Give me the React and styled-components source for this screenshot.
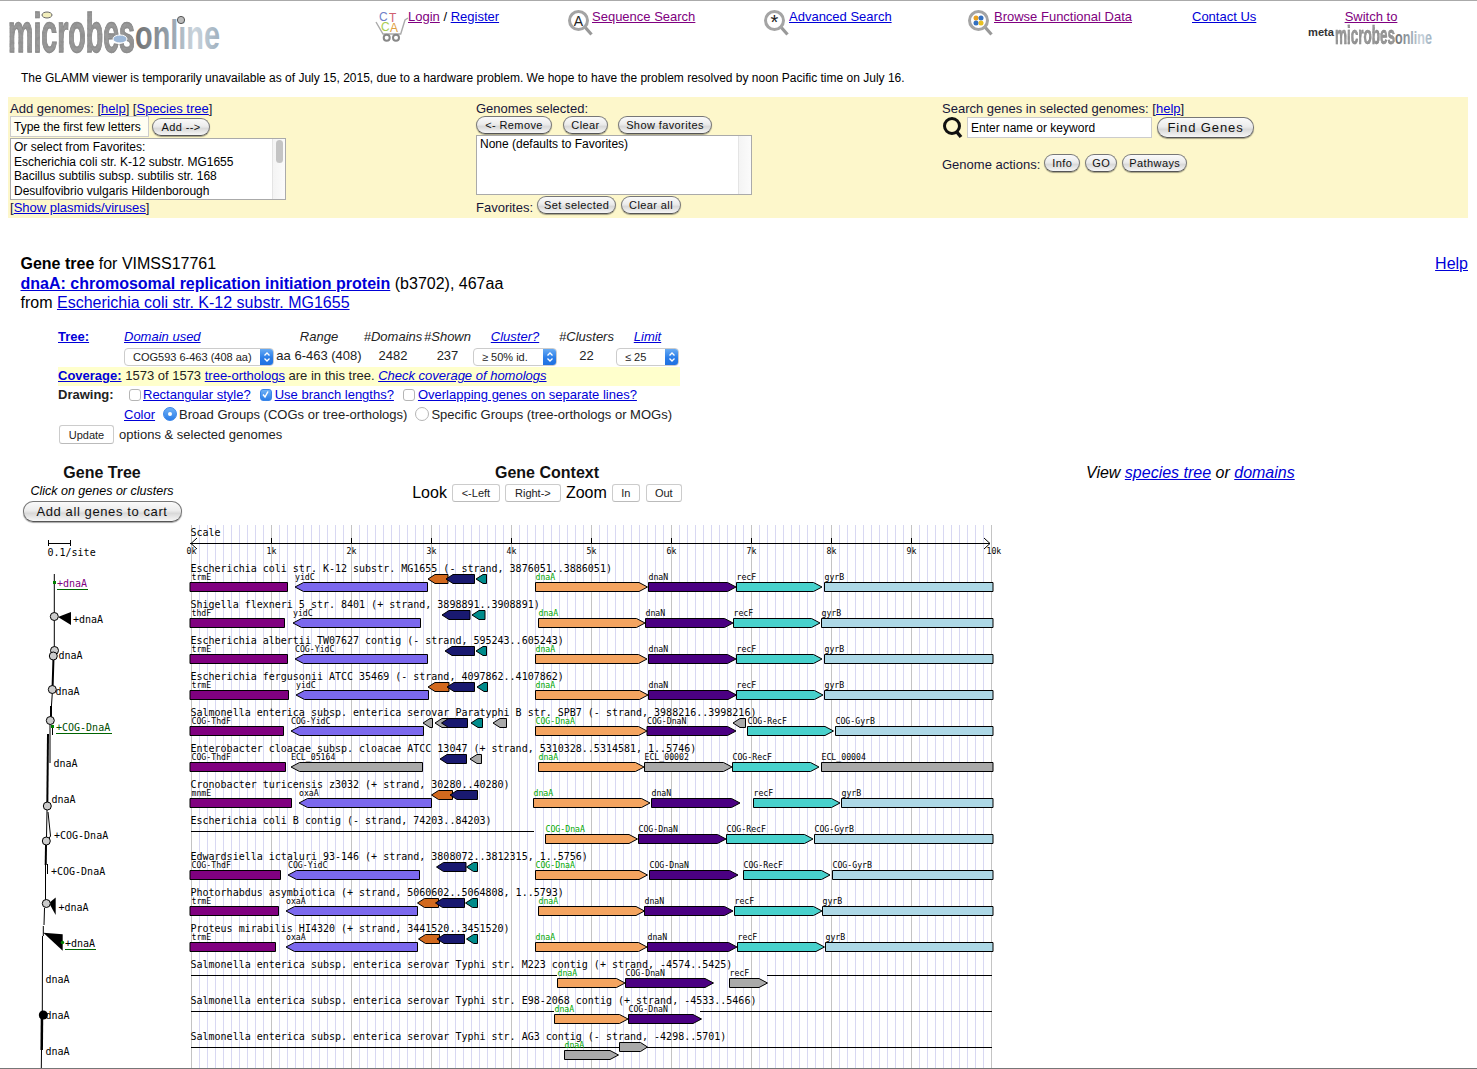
import React from "react";
import styled, { createGlobalStyle } from "styled-components";

const Global = createGlobalStyle`
  html, body { margin: 0; padding: 0; background: #fff; overflow: hidden; }
  body { font-family: "Liberation Sans", Arial, sans-serif; color: #000; }
`;

const Page = styled.div`
  height: 1069px;
  box-sizing: border-box;
  border-top: 1px solid #aaa;
  border-bottom: 1px solid #777;
  overflow: hidden;
`;

const Link = styled.a`
  color: ${(p) => (p.$visited ? "#800080" : "#0000d8")};
  text-decoration: underline;
  font-weight: ${(p) => (p.$bold ? "bold" : "inherit")};
  font-style: ${(p) => (p.$italic ? "italic" : "inherit")};
`;

/* header */
const Header = styled.div`
  display: grid;
  grid-template-columns: 376px 192px 196px 204px 224px 117px 1fr;
  height: 62px;
  font-size: 13px;
`;
const LogoCell = styled.div`
  padding: 8px 0 0 6px;
`;
const NavItem = styled.div`
  display: flex;
  align-items: flex-start;
  gap: ${(p) => p.$gap || 1}px;
  padding-top: 8px;
  line-height: 15px;
  white-space: pre;
`;
const SwitchItem = styled.div`
  padding-top: 8px;
  line-height: 15px;
  text-align: center;
  width: 124px;
  display: flex;
  flex-direction: column;
  align-items: center;
`;
const Notice = styled.div`
  font-size: 12px;
  line-height: 14px;
  padding: 8px 0 0 21px;
  height: 34px;
  box-sizing: border-box;
`;

/* yellow genome panel */
const Panel = styled.div`
  margin: 0 9px 0 8px;
  height: 121px;
  background: #fdf7cb;
  display: grid;
  grid-template-columns: 466px 466px 1fr;
  padding-left: 2px;
  box-sizing: border-box;
  font-size: 13px;
  color: #16163a;
`;
const PanelCol = styled.div`
  display: flex;
  flex-direction: column;
`;
const PanelLabel = styled.div`
  line-height: 15px;
  padding-top: 4px;
  height: 19px;
  box-sizing: border-box;
`;
const Row = styled.div`
  display: flex;
  align-items: center;
  gap: ${(p) => p.$gap || 0}px;
  margin-top: ${(p) => p.$mt || 0}px;
`;
const Pill = styled.button`
  font-family: "Liberation Sans", Arial, sans-serif;
  font-size: ${(p) => p.$size || 11}px;
  letter-spacing: ${(p) => p.$spacing ?? 0.4}px;
  color: #111;
  height: ${(p) => p.$h || 18}px;
  width: ${(p) => p.$w}px;
  margin-left: ${(p) => p.$ml || 0}px;
  margin-top: ${(p) => p.$mt || 0}px;
  padding: 0;
  white-space: nowrap;
  border: 1px solid #777;
  border-bottom-color: #555;
  border-radius: 10px;
  background: linear-gradient(#fafafa, #ececec 45%, #d9d9d9 60%, #f6f6f6);
  box-shadow: 0 1px 1px rgba(0, 0, 0, 0.35);
`;
const FieldBox = styled.div`
  width: ${(p) => p.$w}px;
  height: 21px;
  background: ${(p) => (p.$white ? "#fff" : "#fffef2")};
  border: 1px solid #ccc;
  box-sizing: border-box;
  font-size: 12px;
  line-height: 20px;
  padding-left: ${(p) => p.$pad || 3}px;
  color: #000;
`;
const ListBox = styled.div`
  position: relative;
  width: ${(p) => p.$w}px;
  height: ${(p) => p.$h}px;
  margin-top: ${(p) => p.$mt || 0}px;
  background: #fff;
  border: 1px solid #aaa;
  box-sizing: border-box;
  font-size: 12px;
  line-height: 14.7px;
  padding: 1px 0 0 3px;
  color: #000;
`;
const ListScroll = styled.div`
  position: absolute;
  top: 0;
  right: 0;
  bottom: 0;
  width: 12px;
  background: linear-gradient(90deg, #f4f4f4, #fbfbfb);
  border-left: 1px solid #e4e4e4;
  &::after {
    content: "";
    display: ${(p) => (p.$thumb ? "block" : "none")};
    margin: 1px 0 0 3px;
    width: 7px;
    height: 23px;
    border-radius: 4px;
    background: #c4c4c4;
  }
`;
const FootLine = styled.div`
  line-height: 15px;
  margin-top: ${(p) => p.$mt || 0}px;
`;
const ActionLabel = styled.span`
  padding-top: 2px;
`;

/* gene title block */
const GeneHead = styled.div`
  padding: 36px 9px 0 20.5px;
  height: 111px;
  box-sizing: border-box;
  font-size: 16px;
  line-height: 19.5px;
  display: flex;
  justify-content: space-between;
`;

/* options table */
const Options = styled.div`
  margin: 0 0 0 58px;
  width: 622px;
  font-size: 13px;
`;
const OptGrid = styled.div`
  display: grid;
  grid-template-columns: 66px 151px 88px 60px 49px 86px 57px 65px;
  align-items: center;
`;
const HeadCell = styled.div`
  height: 18px;
  line-height: 16px;
  font-style: ${(p) => (p.$plain ? "normal" : "italic")};
  white-space: nowrap;
  text-align: ${(p) => (p.$left ? "left" : "center")};
  color: #222;
`;
const ValCell = styled.div`
  height: 20px;
  line-height: 17px;
  white-space: nowrap;
  text-align: center;
  color: #222;
  display: flex;
  justify-content: ${(p) => (p.$left ? "flex-start" : "center")};
`;
const Select = styled.div`
  width: ${(p) => p.$w}px;
  height: 18px;
  margin-top: 1px;
  box-sizing: border-box;
  border: 1px solid #ccc;
  border-radius: 4px;
  background: #fff;
  font-size: 11px;
  line-height: 17px;
  display: flex;
  justify-content: space-between;
  padding-left: ${(p) => p.$pad}px;
  overflow: hidden;
  color: #222;
`;
const SelectArrow = styled.span`
  width: 14px;
  margin: -1px -1px -1px 0;
  background: linear-gradient(#6eb0f5, #2a7de8 55%, #1e6fe0);
  display: flex;
  align-items: center;
  justify-content: center;
`;
const CoverageRow = styled.div`
  background: #ffffcc;
  height: 19px;
  line-height: 17px;
  color: #222;
`;
const OptRow = styled.div`
  display: flex;
  align-items: center;
  box-sizing: border-box;
  height: ${(p) => p.$h || 20}px;
  padding: 0 0 2px ${(p) => p.$pl || 0}px;
  white-space: nowrap;
  color: #222;
`;
const DrawingLabel = styled.b`
  width: 71px;
`;
const Mark = styled.span`
  display: inline-flex;
  align-items: center;
  justify-content: center;
  width: ${(p) => p.$w || 12}px;
  height: ${(p) => p.$w || 12}px;
  box-sizing: border-box;
  margin: ${(p) => p.$m || "0 2px 0 0"};
  border: 1px solid ${(p) => (p.$on ? "#3a86ea" : "#b5b5b5")};
  border-radius: ${(p) => (p.$round ? "50%" : "3px")};
  background: ${(p) => (p.$on ? "linear-gradient(#6eb0f5, #2a7de8)" : "#fff")};
  flex: none;
  &::after {
    content: "";
    display: ${(p) => (p.$on && p.$round ? "block" : "none")};
    width: 4px;
    height: 4px;
    border-radius: 50%;
    background: #fff;
  }
`;
const FlatButton = styled.button`
  font-family: "Liberation Sans", Arial, sans-serif;
  font-size: 11px;
  color: #222;
  width: ${(p) => p.$w}px;
  height: ${(p) => p.$h || 18}px;
  padding: 0;
  margin: ${(p) => p.$m || 0};
  background: #fff;
  border: 1px solid #ccc;
  border-bottom-color: #bbb;
  border-radius: 3px;
`;

/* section titles above the diagrams */
const Sections = styled.div`
  display: grid;
  grid-template-columns: 204px 686px 1fr;
  margin-top: 18px;
  height: 61px;
`;
const Section = styled.div`
  display: flex;
  flex-direction: column;
  align-items: center;
`;
const SectionTitle = styled.div`
  font-size: 16px;
  font-weight: bold;
  line-height: 18px;
  color: #111;
`;
const Hint = styled.div`
  font-size: 12.5px;
  font-style: italic;
  line-height: 18px;
`;
const Controls = styled.div`
  display: flex;
  align-items: center;
  gap: 5px;
  font-size: 16px;
  line-height: 20px;
  margin-top: 1px;
`;
const ViewLinks = styled.div`
  padding-left: 196px;
  font-size: 16px;
  font-style: italic;
  line-height: 18px;
`;
const Diagrams = styled.div`
  display: flex;
  align-items: flex-start;
`;
const Chart = styled.svg`
  display: block;
  flex: none;
  overflow: visible;
  text {
    font-family: "DejaVu Sans Mono", "Liberation Mono", monospace;
    font-size: 10px;
  }
  text.small {
    font-size: 8.2px;
  }
`;
const Drawing = styled.svg`
  display: block;
  flex: none;
  overflow: visible;
  margin-top: ${(p) => p.$mt || 0}px;
  margin-right: ${(p) => p.$mr || 0}px;
  text {
    font-family: "Liberation Sans", Arial, sans-serif;
  }
`;

/* drawings */
const Mag = ({ w, children }) => (
  <Drawing width={w} height="26" viewBox={`0 0 ${w} 26`} $mt={1}>
    <line x1="16" y1="16" x2="23.5" y2="24.5" stroke="#999" strokeWidth="3.2" />
    <circle cx="10.5" cy="10.5" r="9" fill="#fff" stroke="#a4a4a4" strokeWidth="3" />
    {children}
  </Drawing>
);

const Cart = () => (
  <Drawing width="30" height="31" viewBox="0 0 30 31" $mt={2}>
    <path d="M0 11 L7 23 H24.7 L29 9 L32 7" fill="#fff" stroke="#aaa" strokeWidth="1.4" />
    <text x="3" y="10" fontSize="12" fill="#7080c8">C</text>
    <text x="13" y="11" fontSize="12" fill="#d06070">T</text>
    <text x="5" y="20" fontSize="12" fill="#a8cc50">C</text>
    <text x="14" y="21" fontSize="12" fill="#e0a040">A</text>
    <circle cx="10.7" cy="26.7" r="3" fill="#fff" stroke="#888" strokeWidth="2" />
    <circle cx="20" cy="26.7" r="3" fill="#fff" stroke="#888" strokeWidth="2" />
  </Drawing>
);

const Logo = ({ w, h }) => (
  <Drawing width={w} height={h} viewBox="0 0 216 46">
    <defs>
      <filter id="rough" x="-5%" y="-5%" width="110%" height="110%">
        <feTurbulence type="fractalNoise" baseFrequency="0.28" numOctaves="2" seed="3" />
        <feColorMatrix values="0 0 0 0 0.28  0 0 0 0 0.28  0 0 0 0 0.28  3.4 0 0 0 -1.4" />
        <feComposite in2="SourceGraphic" operator="in" result="n" />
        <feMerge>
          <feMergeNode in="SourceGraphic" />
          <feMergeNode in="n" />
        </feMerge>
      </filter>
      <linearGradient id="onlineFill" x1="0" x2="1" y1="0" y2="0">
        <stop offset="0" stopColor="#707070" />
        <stop offset="0.45" stopColor="#9aa8b4" />
        <stop offset="0.7" stopColor="#ccd6de" />
        <stop offset="1" stopColor="#9fb0be" />
      </linearGradient>
    </defs>
    <text x="2" y="43" fontSize="56" fontWeight="bold" textLength="127" lengthAdjust="spacingAndGlyphs" fill="#9a9a9a" stroke="#8a8a8a" strokeWidth="1.4" filter="url(#rough)">microbes</text>
    <text x="129" y="40" fontSize="40" fontWeight="bold" textLength="85" lengthAdjust="spacingAndGlyphs" fill="url(#onlineFill)">online</text>
    <ellipse cx="41" cy="6" rx="5" ry="3" fill="#f2eebc" stroke="#666" />
    <circle cx="175" cy="11" r="3.6" fill="#bbb" stroke="#555" />
    <ellipse cx="114" cy="30" rx="7" ry="4" fill="#9db8d8" stroke="#fff" />
  </Drawing>
);

const SmallLogo = () => (
  <Drawing width="126" height="24" viewBox="0 0 126 24">
    <text x="0" y="12" fontSize="10" fontWeight="bold" textLength="26" lengthAdjust="spacingAndGlyphs" fill="#333">meta</text>
    <text x="27" y="20" fontSize="26" fontWeight="bold" textLength="60" lengthAdjust="spacingAndGlyphs" fill="#9a9a9a" stroke="#8a8a8a" strokeWidth="0.6" filter="url(#rough)">microbes</text>
    <text x="87" y="20" fontSize="19" fontWeight="bold" textLength="37" lengthAdjust="spacingAndGlyphs" fill="url(#onlineFill)">online</text>
  </Drawing>
);

const Chevrons = () => (
  <svg width="8" height="12" viewBox="0 0 8 12">
    <path d="M1.5 4.5 L4 2 L6.5 4.5 M1.5 7.5 L4 10 L6.5 7.5" fill="none" stroke="#fff" strokeWidth="1.3" />
  </svg>
);

const Tick = () => (
  <svg width="9" height="9" viewBox="0 0 9 9">
    <path d="M2 4.5 L4 7 L7 1.5" fill="none" stroke="#fff" strokeWidth="1.5" />
  </svg>
);

const Search = () => (
  <Drawing width="22" height="22" viewBox="0 0 22 22" $mr={3}>
    <circle cx="10" cy="10" r="7.5" fill="none" stroke="#111" strokeWidth="3" />
    <line x1="14" y1="15" x2="19" y2="21" stroke="#111" strokeWidth="3.5" />
  </Drawing>
);

/* gene colours */
const C = {
  pur: "#800080",
  sla: "#7b68ee",
  org: "#d2691e",
  nav: "#191970",
  tea: "#008b8b",
  san: "#f4a460",
  ind: "#4b0082",
  tur: "#48d1cc",
  blu: "#add8e6",
  gry: "#a9a9a9",
};

// [x1, x2, dir, colour, label, flag]  flag: "g" green label, "t" upper small gene
const rows = [
  { title: "Escherichia coli str. K-12 substr. MG1655 (- strand, 3876051..3886051)", genes: [
    [190, 287.5, 0, "pur", "trmE"], [295, 427.5, -1, "sla", "yidC"], [428, 448, -1, "org", "", "t"], [446, 474.5, -1, "nav", "", "t"], [476, 486.5, -1, "tea", "", "t"],
    [535.5, 647.5, 1, "san", "dnaA", "g"], [648.5, 736, 1, "ind", "dnaN"], [736.5, 822, 1, "tur", "recF"], [824.5, 993, 0, "blu", "gyrB"] ] },
  { title: "Shigella flexneri 5 str. 8401 (+ strand, 3898891..3908891)", genes: [
    [190, 284.5, 0, "pur", "thdF"], [293, 420.5, -1, "sla", "yidC"], [442, 470, -1, "nav", "", "t"], [472, 485, -1, "tea", "", "t"],
    [538.5, 645, 1, "san", "dnaA", "g"], [645.5, 733, 1, "ind", "dnaN"], [733.5, 820, 1, "tur", "recF"], [821.5, 993, 0, "blu", "gyrB"] ] },
  { title: "Escherichia albertii TW07627 contig (- strand, 595243..605243)", genes: [
    [190, 287.5, 0, "pur", "trmE"], [295, 427.5, -1, "sla", "COG-YidC"], [445, 474.5, -1, "nav", "", "t"], [476, 486.5, -1, "tea", "", "t"],
    [535.5, 647, 1, "san", "dnaA", "g"], [648.5, 736, 1, "ind", "dnaN"], [736.5, 822, 1, "tur", "recF"], [824.5, 993, 0, "blu", "gyrB"] ] },
  { title: "Escherichia fergusonii ATCC 35469 (- strand, 4097862..4107862)", genes: [
    [190, 288.5, 0, "pur", "trmE"], [296, 428.5, -1, "sla", "yidC"], [428, 449, -1, "org", "", "t"], [447, 474.5, -1, "nav", "", "t"], [477, 487.5, -1, "tea", "", "t"],
    [535.5, 648, 1, "san", "dnaA", "g"], [648.5, 736.5, 1, "ind", "dnaN"], [736.5, 823, 1, "tur", "recF"], [824.5, 993, 0, "blu", "gyrB"] ] },
  { title: "Salmonella enterica subsp. enterica serovar Paratyphi B str. SPB7 (- strand, 3988216..3998216)", genes: [
    [190, 283.5, 0, "pur", "COG-ThdF"], [291, 423.5, -1, "sla", "COG-YidC"], [423, 432.5, -1, "gry", "", "t"], [435, 450, -1, "gry", "", "t"], [441.5, 467.5, -1, "nav", "", "t"], [471, 482.5, -1, "tea", "", "t"], [493, 506.5, -1, "gry", "", "t"],
    [535.5, 647, 1, "san", "COG-DnaA", "g"], [647, 736, 1, "ind", "COG-DnaN"], [733, 745.5, -1, "gry", "", "t"], [747.5, 833.5, 1, "tur", "COG-RecF"], [835.5, 993, 0, "blu", "COG-GyrB"] ] },
  { title: "Enterobacter cloacae subsp. cloacae ATCC 13047 (+ strand, 5310328..5314581, 1..5746)", genes: [
    [190, 285.5, 0, "pur", "COG-ThdF"], [291, 422.5, -1, "gry", "ECL_05164"], [440, 466.5, -1, "nav", "", "t"], [470, 481.5, -1, "gry", "", "t"],
    [538.5, 644, 1, "san", "dnaA", "g"], [644.5, 732, 1, "gry", "ECL_00002"], [732.5, 819, 1, "tur", "COG-RecF"], [821.5, 993, 0, "gry", "ECL_00004"] ] },
  { title: "Cronobacter turicensis z3032 (+ strand, 30280..40280)", genes: [
    [190, 291.5, 0, "pur", "mnmE"], [299, 431.5, -1, "sla", "oxaA"], [431.5, 452.5, -1, "org", "", "t"], [450, 477.5, -1, "nav", "", "t"],
    [533.5, 650, 1, "san", "dnaA", "g"], [651.5, 740, 1, "ind", "dnaN"], [753.5, 840, 1, "tur", "recF"], [841.5, 993, 0, "blu", "gyrB"] ] },
  { title: "Escherichia coli B contig (- strand, 74203..84203)", lines: [[191, 534]], genes: [
    [545.5, 637.5, 1, "san", "COG-DnaA", "g"], [638.5, 726, 1, "ind", "COG-DnaN"], [726.5, 813, 1, "tur", "COG-RecF"], [814.5, 993, 0, "blu", "COG-GyrB"] ] },
  { title: "Edwardsiella ictaluri 93-146 (+ strand, 3808072..3812315, 1..5756)", genes: [
    [190, 280.5, 0, "pur", "COG-ThdF"], [288, 419.5, -1, "sla", "COG-YidC"], [436.5, 466, -1, "nav", "", "t"], [466.5, 477.5, -1, "tea", "", "t"],
    [535.5, 647.5, 1, "san", "COG-DnaA", "g"], [649.5, 738, 1, "ind", "COG-DnaN"], [743.5, 830, 1, "tur", "COG-RecF"], [832.5, 993, 0, "blu", "COG-GyrB"] ] },
  { title: "Photorhabdus asymbiotica (+ strand, 5060602..5064808, 1..5793)", genes: [
    [190, 278.5, 0, "pur", "trmE"], [286, 417.5, -1, "sla", "oxaA"], [417.5, 438.5, -1, "org", "", "t"], [435.5, 464.5, -1, "nav", "", "t"], [465.5, 477.5, -1, "tea", "", "t"],
    [538.5, 644.5, 1, "san", "dnaA", "g"], [644.5, 733, 1, "ind", "dnaN"], [734.5, 822, 1, "tur", "recF"], [822.5, 993, 0, "blu", "gyrB"] ] },
  { title: "Proteus mirabilis HI4320 (+ strand, 3441520..3451520)", genes: [
    [190, 275.5, 0, "pur", "trmE"], [286, 417.5, -1, "sla", "oxaA"], [418.5, 439.5, -1, "org", "", "t"], [437, 464.5, -1, "nav", "", "t"], [466.5, 477.5, -1, "tea", "", "t"],
    [535.5, 647, 1, "san", "dnaA", "g"], [647.5, 737, 1, "ind", "dnaN"], [737.5, 824.5, 1, "tur", "recF"], [825.5, 993, 0, "blu", "gyrB"] ] },
  { title: "Salmonella enterica subsp. enterica serovar Typhi str. M223 contig (+ strand, -4574..5425)", lines: [[191, 557], [767, 992]], genes: [
    [557.5, 625, 1, "san", "dnaA", "g"], [625.5, 713.5, 1, "ind", "COG-DnaN"], [729.5, 767.5, 1, "gry", "recF"] ] },
  { title: "Salmonella enterica subsp. enterica serovar Typhi str. E98-2068 contig (+ strand, -4533..5466)", lines: [[191, 554], [700, 992]], genes: [
    [554.5, 628, 1, "san", "dnaA", "g"], [628.5, 701.5, 1, "ind", "COG-DnaN"] ] },
  { title: "Salmonella enterica subsp. enterica serovar Typhi str. AG3 contig (- strand, -4298..5701)", lines: [[191, 992]], genes: [
    [564.5, 618.5, 1, "gry", "dnaA", "g"], [619.5, 647.5, 1, "gry", "", "t"] ] },
];

const Gene = ({ x1, x2, dir, color, top, head }) => {
  const y1 = top;
  const y2 = top + 9;
  const mid = top + 4.5;
  let pts;
  if (dir > 0) pts = `${x1},${y1} ${x2 - head},${y1} ${x2},${mid} ${x2 - head},${y2} ${x1},${y2}`;
  else if (dir < 0) pts = `${x1},${mid} ${x1 + head},${y1} ${x2},${y1} ${x2},${y2} ${x1 + head},${y2}`;
  else pts = `${x1},${y1} ${x2},${y1} ${x2},${y2} ${x1},${y2}`;
  return <polygon points={pts} fill={C[color]} stroke="#000" strokeWidth="1" />;
};

const ContextChart = () => {
  const grid = [];
  for (let i = 0; i <= 100; i++) {
    const x = 191.5 + i * 8;
    grid.push(<line key={i} x1={x} x2={x} y1={525} y2={1069} stroke={i % 10 === 0 ? "#c4c4c4" : "#d8d8f2"} shapeRendering="crispEdges" />);
  }
  const ticks = [];
  for (let k = 0; k <= 10; k++) {
    const x = 191.5 + k * 80;
    ticks.push(
      <g key={k}>
        {k > 0 && k < 10 && <line x1={x} x2={x} y1={538} y2={543} stroke="#000" shapeRendering="crispEdges" />}
        <text className="small" x={x - 5} y={554}>{k}k</text>
      </g>
    );
  }
  return (
    <Chart width="810" height="544" viewBox="190 525 810 544">
      {grid}
      <text x="190.5" y="536">Scale</text>
      <line x1="190" x2="990" y1="543.5" y2="543.5" stroke="#000" shapeRendering="crispEdges" />
      <path d="M197 538 L191 543.5 L197 549 M984 538 L990 543.5 L984 549" fill="none" stroke="#000" />
      {ticks}
      {rows.map((r, i) => {
        const top = 582.5 + 36 * i;
        return (
          <g key={i}>
            <text x="190.5" y={top - 11}>{r.title}</text>
            {r.lines && r.lines.map((l, j) => (
              <line key={j} x1={l[0]} x2={l[1]} y1={top - 3} y2={top - 3} stroke="#000" shapeRendering="crispEdges" />
            ))}
            {r.genes.map((g, j) => {
              const isTop = g[5] === "t";
              return (
                <g key={j}>
                  <Gene x1={g[0]} x2={g[1]} dir={g[2]} color={g[3]} top={isTop ? top - 8 : top} head={isTop ? 7 : 8.5} />
                  {g[4] && (
                    <text className="small" x={Math.max(g[0], 191.5)} y={top - 2.5} fill={g[5] === "g" ? "#00a800" : "#000"}>{g[4]}</text>
                  )}
                </g>
              );
            })}
          </g>
        );
      })}
    </Chart>
  );
};

// [x, y centre, text, colour, underline colour]
const leaves = [
  [57, 583, "+dnaA", "#800080", "#006400"],
  [73, 619, "+dnaA"],
  [58.5, 655, "dnaA"],
  [55.5, 691, "dnaA"],
  [56, 727, "+COG-DnaA", "#004d00", "#006400"],
  [53.5, 763, "dnaA"],
  [51.5, 799, "dnaA"],
  [54, 835, "+COG-DnaA"],
  [51, 871, "+COG-DnaA"],
  [58.5, 907, "+dnaA"],
  [65, 943, "+dnaA", "#000", "#006400"],
  [45.5, 979, "dnaA"],
  [45.5, 1015, "dnaA"],
  [45.5, 1051, "dnaA"],
];

const branches = [
  [54.3, 574, 54.3, 650, 1],
  [53.5, 657, 52.5, 690, 2],
  [52.5, 690, 50.5, 720, 1],
  [51, 706, 51, 717, 2],
  [52.5, 726, 52.5, 735, 1],
  [50, 724, 50, 763, 1],
  [48, 734, 47.3, 806, 2],
  [47, 810, 46.5, 838, 1],
  [48, 812, 50.5, 836, 1],
  [50.5, 836, 48, 840, 1],
  [46, 845, 45.7, 865, 2],
  [47.5, 864, 47.5, 874, 1],
  [45.5, 865, 45.5, 900, 1],
  [44.5, 908, 44, 925, 1],
  [43.3, 926, 43.3, 936, 1],
  [42.5, 936, 42.3, 1015, 1],
  [42, 1015, 41.7, 1050, 2.5],
  [41.5, 1050, 41.3, 1069, 1],
];

const TreeChart = () => (
  <Chart width="190" height="544" viewBox="0 525 190 544">
    <path d="M48 540 V546 M48 543 H70 M70 540 V546" stroke="#000" fill="none" shapeRendering="crispEdges" />
    <text x="47.5" y="556">0.1/site</text>
    {branches.map((b, i) => (
      <line key={i} x1={b[0]} y1={b[1]} x2={b[2]} y2={b[3]} stroke="#000" strokeWidth={b[4]} />
    ))}
    <polygon points="58,617 71,612 71,625" fill="#000" />
    <polygon points="49,903 55.7,897.5 55.7,915" fill="#000" />
    <polygon points="43.3,932.7 62.7,934.3 62.7,950.7" fill="#000" />
    {[[54.5, 650.5], [53.3, 656], [52.3, 689.5], [50.3, 720.5], [47.3, 806], [46.3, 841], [46.3, 903.5], [54.3, 616.5]].map((n, i) => (
      <circle key={i} cx={n[0]} cy={n[1]} r="4" fill="#ccc" stroke="#000" strokeWidth="1" />
    ))}
    <circle cx="43.3" cy="1015" r="4.5" fill="#000" />
    <rect x="53" y="581" width="3" height="3" fill="#008000" />
    <rect x="51" y="725" width="3" height="3" fill="#008000" />
    <circle cx="62.5" cy="942.5" r="1.7" fill="#008000" />
    {leaves.map((l, i) => (
      <g key={i}>
        <text x={l[0]} y={l[1] + 3.5} fill={l[3] || "#000"}>{l[2]}</text>
        {l[4] && <line x1={l[0]} x2={l[0] + l[2].length * 6.2} y1={l[1] + 6.5} y2={l[1] + 6.5} stroke={l[4]} shapeRendering="crispEdges" />}
      </g>
    ))}
  </Chart>
);

const App = () => (
  <Page>
    <Global />
    <Header>
      <LogoCell><Logo w={216} h={46} /></LogoCell>
      <NavItem $gap={2}><Cart /><span><Link $visited>Login</Link> / <Link>Register</Link></span></NavItem>
      <NavItem>
        <Mag w={23}><text x="10.5" y="15.5" textAnchor="middle" fontSize="14" fill="#222">A</text></Mag>
        <Link $visited>Sequence Search</Link>
      </NavItem>
      <NavItem>
        <Mag w={24}><text x="10.5" y="19" textAnchor="middle" fontSize="20" fill="#222">*</text></Mag>
        <Link>Advanced Search</Link>
      </NavItem>
      <NavItem>
        <Mag w={25}>
          <circle cx="8" cy="8" r="2.5" fill="#e8a020" />
          <circle cx="13" cy="8" r="2.5" fill="#3370c0" />
          <circle cx="8" cy="13" r="2.5" fill="#3370c0" />
          <circle cx="13" cy="13" r="2.5" fill="#e8c020" />
        </Mag>
        <Link $visited>Browse Functional Data</Link>
      </NavItem>
      <NavItem><Link>Contact Us</Link></NavItem>
      <SwitchItem>
        <Link $visited>Switch to</Link>
        <SmallLogo />
      </SwitchItem>
    </Header>
    <Notice>The GLAMM viewer is temporarily unavailable as of July 15, 2015, due to a hardware problem. We hope to have the problem resolved by noon Pacific time on July 16.</Notice>

    <Panel>
      <PanelCol>
        <PanelLabel>Add genomes: [<Link>help</Link>] [<Link>Species tree</Link>]</PanelLabel>
        <Row $gap={3}>
          <FieldBox $w={139}>Type the first few letters</FieldBox>
          <Pill $w={58}>Add --&gt;</Pill>
        </Row>
        <ListBox $w={276} $h={62} $mt={1}>
          Or select from Favorites:<br />
          Escherichia coli str. K-12 substr. MG1655<br />
          Bacillus subtilis subsp. subtilis str. 168<br />
          Desulfovibrio vulgaris Hildenborough
          <ListScroll $thumb />
        </ListBox>
        <FootLine>[<Link>Show plasmids/viruses</Link>]</FootLine>
      </PanelCol>
      <PanelCol>
        <PanelLabel>Genomes selected:</PanelLabel>
        <Row>
          <Pill $w={76}>&lt;- Remove</Pill>
          <Pill $w={45} $ml={11}>Clear</Pill>
          <Pill $w={94} $ml={10}>Show favorites</Pill>
        </Row>
        <ListBox $w={276} $h={60} $mt={1}>
          None (defaults to Favorites)
          <ListScroll />
        </ListBox>
        <Row>
          <FootLine $mt={5}>Favorites:</FootLine>
          <Pill $w={79} $ml={4}>Set selected</Pill>
          <Pill $w={60} $ml={5}>Clear all</Pill>
        </Row>
      </PanelCol>
      <PanelCol>
        <PanelLabel>Search genes in selected genomes: [<Link>help</Link>]</PanelLabel>
        <Row>
          <Search />
          <FieldBox $w={185} $white>Enter name or keyword</FieldBox>
          <Pill $w={97} $h={21} $size={13} $spacing={0.9} $ml={5}>Find Genes</Pill>
        </Row>
        <Row $mt={16}>
          <ActionLabel>Genome actions:</ActionLabel>
          <Pill $w={36} $ml={4}>Info</Pill>
          <Pill $w={32} $ml={5}>GO</Pill>
          <Pill $w={65} $ml={5}>Pathways</Pill>
        </Row>
      </PanelCol>
    </Panel>

    <GeneHead>
      <div>
        <b>Gene tree</b> for VIMSS17761<br />
        <Link $bold>dnaA: chromosomal replication initiation protein</Link> (b3702), 467aa<br />
        from <Link>Escherichia coli str. K-12 substr. MG1655</Link>
      </div>
      <Link>Help</Link>
    </GeneHead>

    <Options>
      <OptGrid>
        <HeadCell $left $plain><Link $bold>Tree:</Link></HeadCell>
        <HeadCell $left><Link>Domain used</Link></HeadCell>
        <HeadCell>Range</HeadCell>
        <HeadCell>#Domains</HeadCell>
        <HeadCell>#Shown</HeadCell>
        <HeadCell><Link>Cluster?</Link></HeadCell>
        <HeadCell>#Clusters</HeadCell>
        <HeadCell><Link>Limit</Link></HeadCell>

        <ValCell />
        <ValCell $left><Select $w={150} $pad={8}>COG593 6-463 (408 aa)<SelectArrow><Chevrons /></SelectArrow></Select></ValCell>
        <ValCell>aa 6-463 (408)</ValCell>
        <ValCell>2482</ValCell>
        <ValCell>237</ValCell>
        <ValCell><Select $w={84} $pad={8}>≥ 50% id.<SelectArrow><Chevrons /></SelectArrow></Select></ValCell>
        <ValCell>22</ValCell>
        <ValCell><Select $w={63} $pad={8}>≤ 25<SelectArrow><Chevrons /></SelectArrow></Select></ValCell>
      </OptGrid>
      <CoverageRow>
        <Link $bold>Coverage:</Link> 1573 of 1573 <Link>tree-orthologs</Link> are in this tree. <Link $italic>Check coverage of homologs</Link>
      </CoverageRow>
      <OptRow $h={19}>
        <DrawingLabel>Drawing:</DrawingLabel>
        <Mark /><Link>Rectangular style?</Link>
        <Mark $on $m="0 3px 0 9px"><Tick /></Mark><Link>Use branch lengths?</Link>
        <Mark $m="0 3px 0 9px" /><Link>Overlapping genes on separate lines?</Link>
      </OptRow>
      <OptRow $pl={66}>
        <Link>Color</Link>
        <Mark $on $round $w={14} $m="0 2px 0 8px" />Broad Groups (COGs or tree-orthologs)
        <Mark $round $w={14} $m="0 2px 0 8px" />Specific Groups (tree-orthologs or MOGs)
      </OptRow>
      <OptRow $h={21} $pl={1}>
        <FlatButton $w={55} $h={19} $m="0 5px 0 0">Update</FlatButton>options &amp; selected genomes
      </OptRow>
    </Options>

    <Sections>
      <Section>
        <SectionTitle>Gene Tree</SectionTitle>
        <Hint>Click on genes or clusters</Hint>
        <Pill $w={159} $h={21} $size={13} $spacing={0.6} $mt={1}>Add all genes to cart</Pill>
      </Section>
      <Section>
        <SectionTitle>Gene Context</SectionTitle>
        <Controls>
          Look
          <FlatButton $w={48}>&lt;-Left</FlatButton>
          <FlatButton $w={56}>Right-&gt;</FlatButton>
          Zoom
          <FlatButton $w={28}>In</FlatButton>
          <FlatButton $w={36} $m="0 0 0 1px">Out</FlatButton>
        </Controls>
      </Section>
      <ViewLinks>View <Link>species tree</Link> or <Link>domains</Link></ViewLinks>
    </Sections>

    <Diagrams>
      <TreeChart />
      <ContextChart />
    </Diagrams>
  </Page>
);

export default App;
